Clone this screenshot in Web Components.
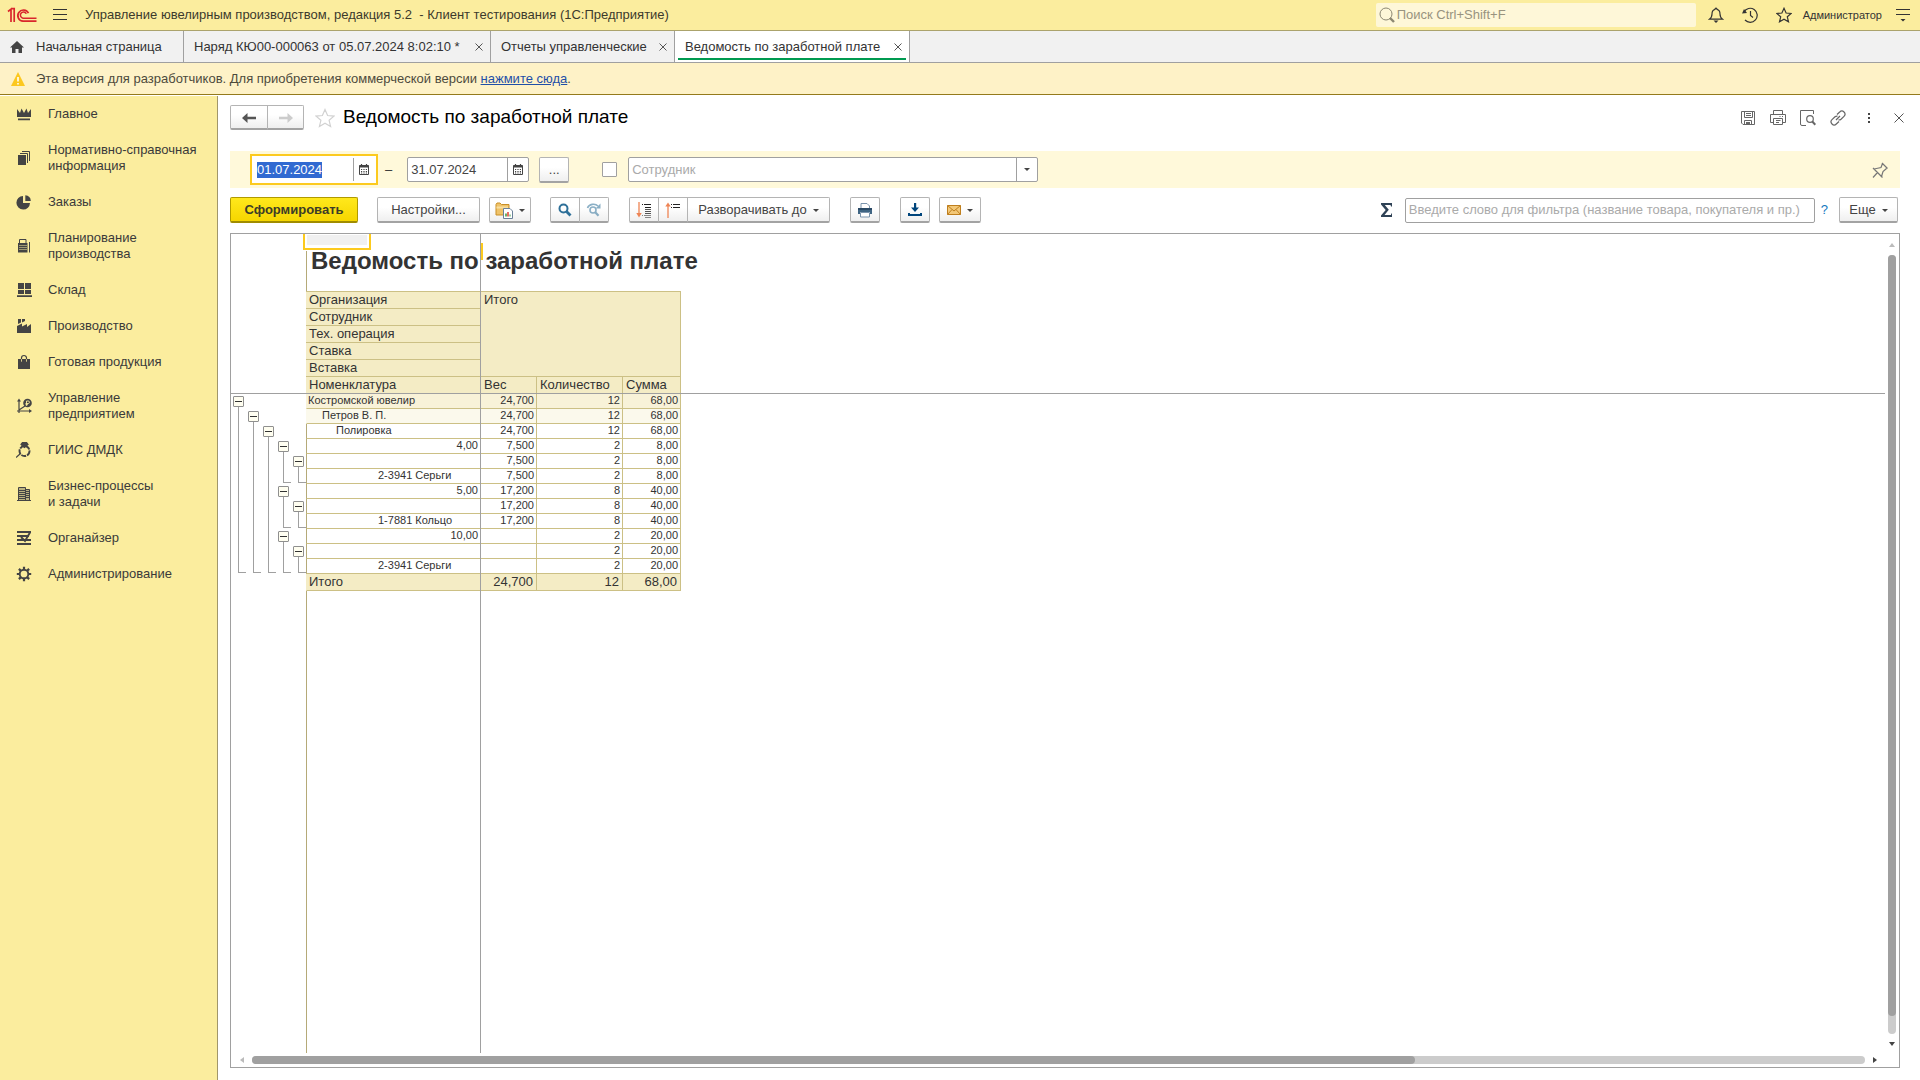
<!DOCTYPE html>
<html lang="ru">
<head>
<meta charset="utf-8">
<title>Ведомость по заработной плате</title>
<style>
html, body { height: 100%; margin: 0; }
body { font: 13px/16px "Liberation Sans", Arial, sans-serif; color: #333; background: #fff; }
</style>
</head>
<body>
<app-shell></app-shell>
<script>
const ICONS = {
  logo: [30, 16, '<g fill="none" stroke="#d9262c" stroke-width="1.7"><path d="M1 4.5 4 2.2V15M4 1.6h3.2V15"/><path d="M21.5 6.2A5.6 5.6 0 1 0 16 14.2H29.5"/><path d="M19.3 6.8A3.1 3.1 0 1 0 16 11.2H29.5" stroke-width="1.5"/></g>'],
  burger: [14, 12, '<path d="M0 .5h14M0 5.500h14M0 10.500h14" stroke="#333"/>'],
  lens: [16, 16, '<g fill="none" stroke="#8c8772"><circle cx="7" cy="7" r="6"/><path d="m11 11 4 4" stroke-width="2.4"/></g>'],
  bell: [16, 16, '<path d="M8 1.2c-.8 0-1 .5-1 1.2C4.700 3 4 4.800 4 7c0 2.700-.8 4-2.600 5.200h13.200C12.800 11 12 9.700 12 7c0-2.200-.7-4-3-4.600 0-.7-.2-1.200-1-1.200z" fill="none" stroke="#333" stroke-width="1.200"/><path d="M5.500 13.500h5L8 16z" fill="#333"/>'],
  clock: [16, 16, '<g fill="none" stroke="#333" stroke-width="1.200"><path d="M2 5A7 7 0 1 1 3 13"/><path d="M8.500 4v4.500l2.500 2"/></g><path d="M0 6.500 2 2l3 4z" fill="#333"/>'],
  star: [16, 16, '<path d="m8 1.300 2.100 4.700 5 .5-3.800 3.300 1.200 5L8 12.200l-4.500 2.600 1.200-5L.9 6.500l5-.5z" fill="none" stroke="currentColor" stroke-width="1.200"/>'],
  bigstar: [20, 20, '<path d="m10 1.500 2.600 6 6.300.6-4.800 4.200 1.500 6.200L10 15.300l-5.600 3.200 1.500-6.200L1.100 8.100l6.300-.6z" fill="none" stroke="#d2d2d2" stroke-width="1.200"/>'],
  service: [14, 14, '<path d="M0 1.500h14M0 6.500h14" stroke="#333"/><path d="M4.500 11h5L7 13.500z" fill="#333"/>'],
  home: [14, 12, '<path d="M7 0 0 6.500h2V12h3.500V8h3v4H12V6.500h2z" fill="#444"/>'],
  close: [8, 8, '<path d="m.5.5 7 7m0-7-7 7" stroke="#555"/>'],
  closebig: [10, 10, '<path d="m.5.5 9 9m0-9-9 9" stroke="#555"/>'],
  warn: [14, 14, '<path d="M7 0 14 14H0z" fill="#fcc820"/><path d="M7 5v4.500M7 11v1.500" stroke="#fff" stroke-width="1.600"/>'],
  crown: [16, 16, '<path d="M1 3l3 4 1.500-4.500L8 7l2.500-4.500L12 7l3-4v8H1zM2 12.500h12v1.800H2z" fill="#444"/>'],
  pages: [16, 16, '<path d="M2 5h8v10H2z" fill="#444"/><path d="M4 3.500h7.500V13M6 1.500h7.500V11" fill="none" stroke="#444"/>'],
  pie: [16, 16, '<path d="M7 2v7h7A6.800 6.800 0 1 1 7 2z" fill="#444"/><path d="M9.300 1.300A6 6 0 0 1 14.800 7H9.300z" fill="#444"/>'],
  calc: [16, 16, '<path d="M2 5h9.500v9.500H2z" fill="#444"/><path d="M3.500 5V1.500H10V5M13.500 4v10.500" fill="none" stroke="#444"/><path d="M3.500 7.500h7M3.500 9.500h7M3.500 11.500h7" stroke="#fbed9e" stroke-dasharray="1 1"/>'],
  store: [16, 16, '<path d="M2 1h6v6H2zM9 1h6v6H9zM2 8h6v4H2zM9 8h6v4H9zM1 13.300h15V15H1z" fill="#444"/>'],
  factory: [16, 16, '<path d="M1 8 6 5.500v3L11 6v3l4-3v9H1zM2 1h3v3.500L2 6zM6 1h3v2L6 4.500z" fill="#444"/>'],
  bag: [16, 16, '<path d="M2 5h12v10H2z" fill="#444"/><path d="M5.500 7.500V4a2.500 2.500 0 0 1 5 0v3.500" fill="none" stroke="#444" stroke-width="1.200"/><path d="M5.500 5.200v2.500M10.500 5.200v2.500" stroke="#fbed9e" stroke-width=".8"/>'],
  chart: [16, 16, '<path d="M3 15V3M1 13h13M3 12l6-4" fill="none" stroke="#444" stroke-width="1.200"/><path d="M3 .5 1 3.500h4zM16 13l-3-2v4z" fill="#444"/><circle cx="11.500" cy="5" r="4.300" fill="#444"/><path d="M10.500 7.800V3h1.700a1.200 1.200 0 0 1 0 2.500H9.500M9.500 6.700h2.500" stroke="#fbed9e" fill="none" stroke-width=".9"/>'],
  gem: [16, 16, '<circle cx="8.500" cy="9" r="5" fill="none" stroke="#444" stroke-width="1.900" stroke-dasharray="5 1"/><path d="M8.500 5.500 5 2.500 6.500.5h4L12 2.500zM0 15.500l4.500-4" fill="#444" stroke="#444" stroke-width="1.200"/>'],
  building: [16, 16, '<path d="M3 1h6.500v2.500H14V15H3z" fill="#444" fill-opacity=".35"/><path d="M2.500 15V1.500h7V15M9.500 3.500h4V15M1 14.500h14M3 4.500h6M3 6.500h6M3 8.500h6M3 10.500h6M3 12.500h6M10 5.500h4M10 7.500h4M10 9.500h4M10 11.500h4" fill="none" stroke="#444"/>'],
  organizer: [16, 16, '<path d="M1 2h14M1 6h12M1 10h14M1 14h14M14 2.500 9 11 5 7" fill="none" stroke="#444" stroke-width="1.900"/>'],
  gear: [16, 16, '<circle cx="8" cy="8" r="4.300" fill="none" stroke="#444" stroke-width="1.900"/><path d="M8 .8v3M8 12.200v3M.8 8h3M12.200 8h3M2.900 2.900l2 2M11.100 11.100l2 2M2.900 13.100l2-2M11.100 4.900l2-2" stroke="#444" stroke-width="2.200"/>'],
  back: [14, 10, '<path d="M0 5 5.500 0v3.700H14v2.600H5.500V10z" fill="#555"/>'],
  forward: [14, 10, '<path d="M14 5 8.500 0v3.700H0v2.600h8.500V10z" fill="#ccc"/>'],
  save: [16, 16, '<g fill="none" stroke="#666"><path d="M1.500 1.500h13v13H3L1.500 13z"/><path d="M4.500 1.500v6h8v-6M6 3.500h5M6 5.500h5M4.500 14.500v-4h7v4"/></g><path d="M6 12h4v3H6z" fill="#666"/>'],
  print: [16, 16, '<g fill="none" stroke="#666"><path d="M3.500 4.500v-4h9v4M3.500 12.500h-3v-8h15v8h-3"/><path d="M3.500 8.500h9v6h-9zM6 10.500h4.500M6 12.500h3"/><path d="M9.500 6.500h1M12 6.500h1"/></g>'],
  preview: [16, 16, '<g fill="none" stroke="#666"><path d="M6 15.500H2A1.500 1.500 0 0 1 .5 14V.5h13V4"/><circle cx="10" cy="9" r="3.300" stroke-width="1.200"/><path d="m12.300 11.500 3 3.200" stroke-width="2"/></g>'],
  link: [16, 16, '<g fill="none" stroke="#666" stroke-width="1.200"><path d="M7 4.500 9.700 2a3 3 0 0 1 4.300 4.300L11 9.200a3 3 0 0 1-2.500.7M9 11.500 6.300 14A3 3 0 0 1 2 9.700L5 6.800a3 3 0 0 1 2.500-.7M6 10l4-4"/></g>'],
  dots: [4, 12, '<path d="M1 1h2v2H1zM1 5h2v2H1zM1 9h2v2H1z" fill="#444"/>'],
  calendar: [10, 11, '<path d="M.5 1.500h9v9h-9z" fill="#fff" stroke="#444"/><path d="M.5 2.500h9" stroke="#444" stroke-width="2"/><path d="M2.500 0v2M7.500 0v2" stroke="#444" stroke-width="1.200"/><path d="M2 5.500h6M2 7.500h6M2 9h6" stroke="#444" stroke-dasharray="1.200 1.200"/>'],
  caret: [6, 3, '<path d="M0 0h6L3 3z" fill="#444"/>'],
  pin: [16, 16, '<path d="M10 1l5.500 5.500M10.500 1.500 9 5.500 2 7l7.500 7.500L11 9.500l3.500-3M1 6l9.500 9.500M5.500 10.500 1 15.500" fill="none" stroke="#777" stroke-width="1.200"/>'],
  variant: [18, 18, '<path d="M1 14V3.500L2 2h3l1.500 1.500H14V14z" fill="#efc36a" stroke="#c98f26"/><path d="M1.500 6.500H13" stroke="#f8dfa0" stroke-width="2"/><path d="M8.500 7.500H15l2.500 2.500v7.500h-9z" fill="#fff" stroke="#6a8199"/><path d="M11 15.500v-3" stroke="#3a9a3a" stroke-width="1.500"/><path d="M13 15.500V11" stroke="#e03c31" stroke-width="1.500"/><path d="M15 15.500v-2" stroke="#3a9a3a"/>'],
  find: [14, 14, '<circle cx="5.500" cy="5.500" r="4" fill="none" stroke="#2e7099" stroke-width="2"/><path d="m8.500 8.500 4 4" stroke="#2e7099" stroke-width="2.800"/>'],
  findnext: [16, 14, '<g opacity=".55"><circle cx="7" cy="7" r="3" fill="none" stroke="#2e7099" stroke-width="1.600"/><path d="m9 9 3.500 3.800" stroke="#2e7099" stroke-width="2.200"/><path d="M1.500 5C3 1 9 0 12 3" fill="none" stroke="#2e7099" stroke-width="1.600"/><path d="M14.500.5v5h-5z" fill="#2e7099"/></g>'],
  expand: [16, 16, '<path d="M3 0v12" stroke="#ee8454" stroke-width="1.300"/><path d="M.3 11h5.400L3 15.500z" fill="#ee8454"/><path d="M6 2.500h1M8 2.500h7M9 5.500h6" stroke="#222"/><path d="M9 7.500h6M9 9.500h6M9 11.500h6" stroke="#555"/><path d="M6 13.500h1M8 13.500h7M9 15.500h6" stroke="#888"/>'],
  collapse: [16, 16, '<path d="M3 4v12" stroke="#ee8454" stroke-width="1.300"/><path d="M.3 4.500h5.400L3 .5z" fill="#ee8454"/><path d="M6 2.500h1M8 2.500h7M6 5.500h1M8 5.500h7" stroke="#222"/>'],
  printer: [16, 16, '<path d="M4 6V1.500h6L12.500 4v2" fill="#fff" stroke="#7b94ad"/><path d="M1 6h14v6h-2v-2H3v2H1z" fill="#3f6583"/><path d="M1 6h14v2H1z" fill="#2a4a66"/><path d="M3.500 10.500h9v4.500h-9z" fill="#fff" stroke="#7b94ad"/>'],
  download: [14, 14, '<path d="M6 0h2.200v4.500H11L7 9 3 4.500h3z" fill="#00457c"/><path d="M1 10v2h12v-2" fill="none" stroke="#00457c" stroke-width="2"/>'],
  mail: [14, 10, '<path d="M.5.500h13v9H.5z" fill="#f3c878" stroke="#bf7f1e"/><path d="M.5.5 7 6l6.500-5.500M.5 9.500 5 4.500M13.500 9.500 9 4.500" fill="none" stroke="#bf7f1e"/>'],
  sum: [11, 14, '<path d="M0 0h11v3.500h-1L9.500 2H3.800l4 4.800L3.500 12H10l.2-1.500H11V14H0v-1.500L4.700 7 0 1.500z" fill="#2f4256"/>'],
  up: [6, 4, '<path d="M3 0 6 4H0z" fill="#bbb"/>'],
  down: [6, 4, '<path d="M0 0h6L3 4z" fill="#444"/>'],
  left: [4, 6, '<path d="M4 0v6L0 3z" fill="#bbb"/>'],
  right: [4, 6, '<path d="M0 0v6l4-3z" fill="#444"/>']
};

/* Base class: stamps the class's markup into an open shadow root. */
class Part extends HTMLElement {
  constructor() {
    super();
    this.attachShadow({ mode: 'open' });
  }
  connectedCallback() {
    const t = document.createElement('template');
    t.innerHTML = `<style>*{box-sizing:border-box}:host{display:block}button,input{font:inherit;color:inherit}</style>${this.view()}`;
    this.shadowRoot.replaceChildren(t.content.cloneNode(true));
    this.ready();
  }
  ready() {}
}

customElements.define('app-icon', class extends Part {
  view() {
    const [w, h, body] = ICONS[this.getAttribute('name')];
    return `<style>:host{flex:none;width:${w}px;height:${h}px}svg{display:block}</style>
      <svg width="${w}" height="${h}" viewBox="0 0 ${w} ${h}" aria-hidden="true">${body}</svg>`;
  }
});

customElements.define('tool-button', class extends Part {
  view() {
    return `<style>
      :host{flex:none;height:26px}
      button{display:flex;align-items:center;justify-content:center;gap:6px;width:100%;height:100%;padding:1px 7px 0;
        background:linear-gradient(#fff 40%,#efefef);border:1px solid #b4b4b4;border-bottom:2px solid #a3a3a3;border-radius:2px;white-space:nowrap;color:#444}
      :host([start]) button{border-radius:2px 0 0 2px}
      :host([mid]),:host([end]){margin-left:-1px}
      :host([mid]) button{border-radius:0}
      :host([end]) button{border-radius:0 2px 2px 0}
      :host([primary]) button{background:linear-gradient(#ffe81c,#f6d600);border-color:#b09a00;border-bottom-color:#a08c00;font-weight:bold;color:#3c3c28}
      :host([square]) button{padding:1px 0 0}
      </style><button type="button" aria-label="${this.getAttribute('label') || this.textContent.trim()}"><slot></slot></button>`;
  }
});

customElements.define('title-bar', class extends Part {
  view() {
    return `<style>
      :host{display:flex;align-items:center;height:31px;padding:0 10px 0 7px;background:#fbed9e;border-bottom:1px solid #aba36c}
      .burger{margin-left:16px}
      h1{flex:1;margin:0 0 0 18px;font-size:13px;font-weight:normal;white-space:pre;color:#3c3a2c}
      .search{display:flex;align-items:center;gap:2px;width:320px;height:24px;margin-right:12px;padding-left:3px;background:#fef7d8;border-radius:2px}
      input{flex:1;min-width:0;border:0;padding:0;background:none;outline:0}
      input::placeholder{color:#98937f;opacity:1}
      .tools{display:flex;align-items:center;gap:18px}
      button{display:flex;border:0;padding:0;background:none;color:#333}
      .user{margin:0 14px 0 11px;font-size:11px}
      </style>
      <app-icon name="logo"></app-icon>
      <button class="burger" aria-label="Меню"><app-icon name="burger"></app-icon></button>
      <h1>Управление ювелирным производством, редакция 5.2  - Клиент тестирования (1С:Предприятие)</h1>
      <label class="search"><app-icon name="lens"></app-icon><input aria-label="Поиск" placeholder="Поиск Ctrl+Shift+F"></label>
      <div class="tools">
        <button aria-label="Уведомления"><app-icon name="bell"></app-icon></button>
        <button aria-label="История"><app-icon name="clock"></app-icon></button>
        <button aria-label="Избранное"><app-icon name="star"></app-icon></button>
      </div>
      <button class="user">Администратор</button>
      <button aria-label="Сервис"><app-icon name="service"></app-icon></button>`;
  }
});

customElements.define('window-tab', class extends Part {
  view() {
    const closable = !this.hasAttribute('home');
    return `<style>
      :host{display:flex;align-items:center;justify-content:space-between;height:31px;padding:0 7px 0 10px;border-right:1px solid #a0a0a0}
      :host([active]){background:linear-gradient(#009a50,#009a50) center 27px/calc(100% - 6px) 2px no-repeat #fff}
      button{display:flex;align-items:center;border:0;padding:0;background:none;white-space:nowrap;color:#333}
      .name{gap:12px}
      </style>
      <button class="name">${closable ? '' : '<app-icon name="home"></app-icon>'}<slot></slot></button>
      ${closable ? '<button aria-label="Закрыть"><app-icon name="close"></app-icon></button>' : ''}`;
  }
});

customElements.define('tab-strip', class extends Part {
  view() {
    return `<style>:host{display:flex;height:32px;background:#f1f1f1;border-bottom:1px solid #a0a0a0}
      .short{min-width:184px}.wide{min-width:307px}.mid{min-width:235px}</style>
      <window-tab class="short" home>Начальная страница</window-tab>
      <window-tab class="wide">Наряд КЮ00-000063 от 05.07.2024 8:02:10 *</window-tab>
      <window-tab class="short">Отчеты управленческие</window-tab>
      <window-tab class="mid" active>Ведомость по заработной плате</window-tab>`;
  }
});

customElements.define('notice-bar', class extends Part {
  view() {
    return `<style>
      :host{display:flex;align-items:center;gap:11px;height:32px;padding-left:11px;background:#fef2c7;border-bottom:1px solid #947a1c}
      p{margin:0;color:#4d4a3c}a{color:#1f4fa8}
      </style>
      <app-icon name="warn"></app-icon>
      <p>Эта версия для разработчиков. Для приобретения коммерческой версии <a href="#buy">нажмите сюда</a>.</p>`;
  }
});

customElements.define('section-menu', class extends Part {
  view() {
    const items = [['crown', 'Главное'], ['pages', 'Нормативно-справочная<br>информация'], ['pie', 'Заказы'],
      ['calc', 'Планирование<br>производства'], ['store', 'Склад'], ['factory', 'Производство'], ['bag', 'Готовая продукция'],
      ['chart', 'Управление<br>предприятием'], ['gem', 'ГИИС ДМДК'], ['building', 'Бизнес-процессы<br>и задачи'],
      ['organizer', 'Органайзер'], ['gear', 'Администрирование']];
    return `<style>
      :host{flex:none;width:218px;background:#fbed9e;border-right:1px solid #a1966a}
      a{display:flex;align-items:center;gap:16px;padding:10px 0 10px 16px;color:#3a3a3a;text-decoration:none}
      </style><nav>${items.map(([i, t]) => `<a href="#${i}"><app-icon name="${i}"></app-icon><span>${t}</span></a>`).join('')}</nav>`;
  }
});

customElements.define('form-header', class extends Part {
  view() {
    return `<style>
      :host{display:flex;align-items:center;height:25px}
      tool-button{height:25px}
      .back{width:38px}.fwd{width:37px}
      .star{margin-left:11px}
      h2{flex:1;margin:0 0 0 8px;padding-bottom:2px;font-size:19px;line-height:22px;font-weight:normal;color:#000}
      button{display:flex;border:0;padding:0;background:none}
      .tools{display:flex;align-items:center;gap:14px;margin-right:-4px}
      .dots{margin:0 9px 0 7px}
      </style>
      <tool-button class="back" start label="Назад"><app-icon name="back"></app-icon></tool-button>
      <tool-button class="fwd" end label="Вперед"><app-icon name="forward"></app-icon></tool-button>
      <button class="star" aria-label="В избранное"><app-icon name="bigstar"></app-icon></button>
      <h2>Ведомость по заработной плате</h2>
      <div class="tools">
        <button aria-label="Сохранить"><app-icon name="save"></app-icon></button>
        <button aria-label="Печать"><app-icon name="print"></app-icon></button>
        <button aria-label="Предварительный просмотр"><app-icon name="preview"></app-icon></button>
        <button aria-label="Получить ссылку"><app-icon name="link"></app-icon></button>
        <button class="dots" aria-label="Ещё действия"><app-icon name="dots"></app-icon></button>
        <button aria-label="Закрыть"><app-icon name="closebig"></app-icon></button>
      </div>`;
  }
});

/* Text box with an optional button at its right end. */
customElements.define('field-box', class extends Part {
  view() {
    const a = n => this.getAttribute(n) || '';
    return `<style>
      :host{flex:none}
      .box{display:flex;height:25px;border:1px solid #a0a0a0;border-radius:2px;background:#fff;overflow:hidden}
      input{flex:1;min-width:0;border:0;padding:0 3px;background:none;outline:0;color:#444}
      input::placeholder{color:#aaa;opacity:1}
      input::selection{background:#316ad1;color:#fff}
      button{display:flex;align-items:center;justify-content:center;width:21px;border:0;border-left:1px solid #a0a0a0;padding:0;background:none}
      :host([focused]) .box{height:31px;padding:2px;border:2px solid #fcca1e;border-radius:0}
      </style>
      <div class="box"><input aria-label="${a('label')}" value="${a('value')}" placeholder="${a('placeholder')}">
      ${a('icon') ? `<button aria-label="Выбрать"><app-icon name="${a('icon')}"></app-icon></button>` : ''}</div>`;
  }
  ready() {
    if (this.hasAttribute('focused')) {
      const input = this.shadowRoot.querySelector('input');
      input.focus();
      input.select();
    }
  }
});

customElements.define('filter-bar', class extends Part {
  view() {
    return `<style>
      :host{display:flex;align-items:center;height:37px;padding:0 12px 0 20px;background:#fff9da}
      .from{width:128px}.dash{margin:0 15px 0 7px}.to{width:122px}
      .period{width:30px;margin-left:10px}
      input{appearance:none;width:15px;height:15px;margin:0 11px 0 33px;border:1px solid #a0a0a0;border-radius:1px;background:#fff}
      .who{width:410px}
      .pin{display:flex;margin-left:auto;border:0;padding:0;background:none}
      </style>
      <field-box class="from" focused label="Начало периода" value="01.07.2024" icon="calendar"></field-box>
      <span class="dash">–</span>
      <field-box class="to" label="Конец периода" value="31.07.2024" icon="calendar"></field-box>
      <tool-button class="period">...</tool-button>
      <input type="checkbox" aria-label="Отбор по сотруднику">
      <field-box class="who" label="Сотрудник" placeholder="Сотрудник" icon="caret"></field-box>
      <button class="pin" aria-label="Закрепить"><app-icon name="pin"></app-icon></button>`;
  }
});

customElements.define('command-bar', class extends Part {
  view() {
    return `<style>
      :host{display:flex;align-items:center;height:26px;padding-right:2px}
      .run{width:128px;margin-right:19px}.set{width:103px;margin-right:9px}
      .w30{width:30px}.w42{width:42px}.lvl{width:143px}
      .g19{margin-right:19px}.g20{margin-right:20px}.g9{margin-right:9px}
      .sum{margin:0 13px 0 auto}.filter{width:410px}
      a{margin:0 11px 0 6px;color:#1478c0;text-decoration:none}
      .more{width:59px}
      </style>
      <tool-button class="run" primary>Сформировать</tool-button>
      <tool-button class="set">Настройки...</tool-button>
      <tool-button class="w42 g19" square label="Варианты"><app-icon name="variant"></app-icon><app-icon name="caret"></app-icon></tool-button>
      <tool-button class="w30" start square label="Найти"><app-icon name="find"></app-icon></tool-button>
      <tool-button class="w30 g20" end square label="Найти далее"><app-icon name="findnext"></app-icon></tool-button>
      <tool-button class="w30" start square label="Развернуть"><app-icon name="expand"></app-icon></tool-button>
      <tool-button class="w30" mid square label="Свернуть"><app-icon name="collapse"></app-icon></tool-button>
      <tool-button class="lvl g20" end><span>Разворачивать до</span><app-icon name="caret"></app-icon></tool-button>
      <tool-button class="w30 g20" square label="Печать"><app-icon name="printer"></app-icon></tool-button>
      <tool-button class="w30 g9" square label="Сохранить"><app-icon name="download"></app-icon></tool-button>
      <tool-button class="w42" square label="Отправить"><app-icon name="mail"></app-icon><app-icon name="caret"></app-icon></tool-button>
      <app-icon class="sum" name="sum"></app-icon>
      <field-box class="filter" label="Фильтр" placeholder="Введите слово для фильтра (название товара, покупателя и пр.)"></field-box>
      <a href="#help">?</a>
      <tool-button class="more"><span>Еще</span><app-icon name="caret"></app-icon></tool-button>`;
  }
});

customElements.define('scroll-track', class extends Part {
  view() {
    const v = this.hasAttribute('vertical');
    return `<style>
      :host{display:flex;align-items:center;flex-direction:${v ? 'column' : 'row'};gap:8px;padding:${v ? '9px 0 7px' : '0 8px 0 9px'}}
      .track{flex:1;${v ? 'width' : 'height'}:8px;border-radius:4px;background:#ccc}
      .thumb{${v ? 'height:97.700%' : 'width:72.100%;height:100%'};border-radius:4px;background:#a0a0a0}
      </style>
      <app-icon name="${v ? 'up' : 'left'}"></app-icon>
      <div class="track"><div class="thumb"></div></div>
      <app-icon name="${v ? 'down' : 'right'}"></app-icon>`;
  }
});

customElements.define('report-table', class extends Part {
  view() {
    /* Outline marks per level: b = button, l = line, e = line end, . = blank. */
    const rows = [
      ['b....', 'n0', 'Костромской ювелир', '24,700', '12', '68,00', 'a'],
      ['lb...', 'n1', 'Петров В. П.', '24,700', '12', '68,00', 'c'],
      ['llb..', 'n2', 'Полировка', '24,700', '12', '68,00', ''],
      ['lllb.', 'r', '4,00', '7,500', '2', '8,00', ''],
      ['llllb', 'n4', '', '7,500', '2', '8,00', ''],
      ['lllee', 'n5', '2-3941 Серьги', '7,500', '2', '8,00', ''],
      ['lllb.', 'r', '5,00', '17,200', '8', '40,00', ''],
      ['llllb', 'n4', '', '17,200', '8', '40,00', ''],
      ['lllee', 'n5', '1-7881 Кольцо', '17,200', '8', '40,00', ''],
      ['lllb.', 'r', '10,00', '', '2', '20,00', ''],
      ['llllb', 'n4', '', '', '2', '20,00', ''],
      ['eeeee', 'n5', '2-3941 Серьги', '', '2', '20,00', '']
    ];
    const mark = m => m === 'b' ? '<span class="b"><button aria-label="Свернуть группу"></button></span>' : `<span class="${m === '.' ? '' : m}"></span>`;
    const heads = ['Сотрудник', 'Тех. операция', 'Ставка', 'Вставка'];
    return `<style>
      table{table-layout:fixed;width:450px;border-spacing:0}
      td,th{height:17px;padding:0 3px;border:0 solid #ccc085;border-width:0 1px 1px 0;text-align:left;font-weight:normal;line-height:16px;white-space:nowrap}
      td.g{padding:0;border:0}
      th,.total td{background:#f4ecc5}
      .top th{border-top-width:1px;height:18px}
      .total td.g{background:none}
      th.all{vertical-align:top}
      .row td{height:15px;padding:0 2px 1px;font-size:11px;line-height:13px;text-align:right}
      td.name{border-left:1px solid #b5aa78}
      .a td{background:#f8f2d8}.c td{background:#fbf9ec}
      .a td.name,.c td.name,.total td.name{border-left-color:transparent}
      .row td.g{padding:0;background:none}
      .row td.name{text-align:left}
      .row td.name.r{text-align:right}
      .row td.n0{padding-left:1px}.row td.n1{padding-left:15px}.row td.n2{padding-left:29px}.row td.n5{padding-left:71px}
      .total td{text-align:right}.total td.name{text-align:left;padding-left:2px}
      .marks{display:flex;height:15px}
      .marks span{flex:none;width:15px;padding-left:7px}
      .l{background:linear-gradient(#a0a0a0,#a0a0a0) 7px 0/1px 100% no-repeat}
      .e{background:linear-gradient(#a0a0a0,#a0a0a0) 7px 0/1px 14px no-repeat,linear-gradient(#a0a0a0,#a0a0a0) 7px 13px/8px 1px no-repeat}
      .marks .b{padding:2px 0 0 2px;background:linear-gradient(#a0a0a0,#a0a0a0) 7px 12px/1px 100% no-repeat}
      .b button{display:block;width:11px;height:11px;padding:0;border:1px solid #8f8f8f;border-radius:1px;background:linear-gradient(#333,#333) center/7px 1px no-repeat #fffef0}
      </style>
      <table>
        <colgroup><col style="width:75px"><col style="width:175px"><col style="width:56px"><col style="width:86px"><col style="width:58px"></colgroup>
        <tr class="top"><td class="g"></td><th>Организация</th><th class="all" colspan="3" rowspan="5">Итого</th></tr>
        ${heads.map(h => `<tr><td class="g"></td><th>${h}</th></tr>`).join('')}
        <tr><td class="g"></td><th>Номенклатура</th><th>Вес</th><th>Количество</th><th>Сумма</th></tr>
        ${rows.map(([m, n, t, w, q, s, k]) => `<tr class="row ${k}"><td class="g"><div class="marks">${[...m].map(mark).join('')}</div></td><td class="name ${n}">${t}</td><td>${w}</td><td>${q}</td><td>${s}</td></tr>`).join('')}
        <tr class="total"><td class="g"></td><td class="name">Итого</td><td>24,700</td><td>12</td><td>68,00</td></tr>
      </table>`;
  }
});

customElements.define('report-sheet', class extends Part {
  view() {
    return `<style>
      :host{display:grid;grid-template:1fr 14px / 1fr 14px;flex:1;min-height:0;border:1px solid #a0a0a0;background:#fff}
      .view{position:relative;overflow:hidden;background:linear-gradient(#b5aa78,#b5aa78) 75px 17px/1px 100% no-repeat}
      h3{height:57px;margin:0;padding:13px 0 0 80px;font-size:24px;line-height:28px;font-weight:bold;white-space:nowrap}
      .fx{position:absolute;left:249px;top:0;bottom:0;width:1px;background:#a0a0a0}
      .fy{position:absolute;left:0;right:0;top:159px;height:1px;background:#a0a0a0}
      .cell{position:absolute;left:72px;top:0;width:68px;height:16px;padding:1px 2px 2px;border:2px solid #fcca1e;border-top:0;background:#fff}
      .cell::before{content:"";display:block;height:10px;background:#f0f0f0}
      .tick{position:absolute;left:250px;top:9px;width:2px;height:17px;background:#fcca1e}
      .h{grid-area:2/1}.v{grid-area:1/2}
      </style>
      <div class="view">
        <h3>Ведомость по заработной плате</h3>
        <report-table></report-table>
        <div class="cell"></div><div class="tick"></div><div class="fx"></div><div class="fy"></div>
      </div>
      <scroll-track class="v" vertical></scroll-track>
      <scroll-track class="h"></scroll-track>`;
  }
});

customElements.define('app-shell', class extends Part {
  view() {
    return `<style>
      :host{display:flex;flex-direction:column;height:100vh;min-height:700px}
      .body{display:flex;flex:1;min-height:0;padding-top:1px}
      main{flex:1;display:flex;flex-direction:column;min-width:0;padding:9px 20px 12px 12px}
      filter-bar{margin-top:21px}command-bar{margin:9px 0 10px}
      </style>
      <title-bar></title-bar><tab-strip></tab-strip><notice-bar></notice-bar>
      <div class="body"><section-menu></section-menu>
        <main><form-header></form-header><filter-bar></filter-bar><command-bar></command-bar><report-sheet></report-sheet></main>
      </div>`;
  }
});
</script>
</body>
</html>
